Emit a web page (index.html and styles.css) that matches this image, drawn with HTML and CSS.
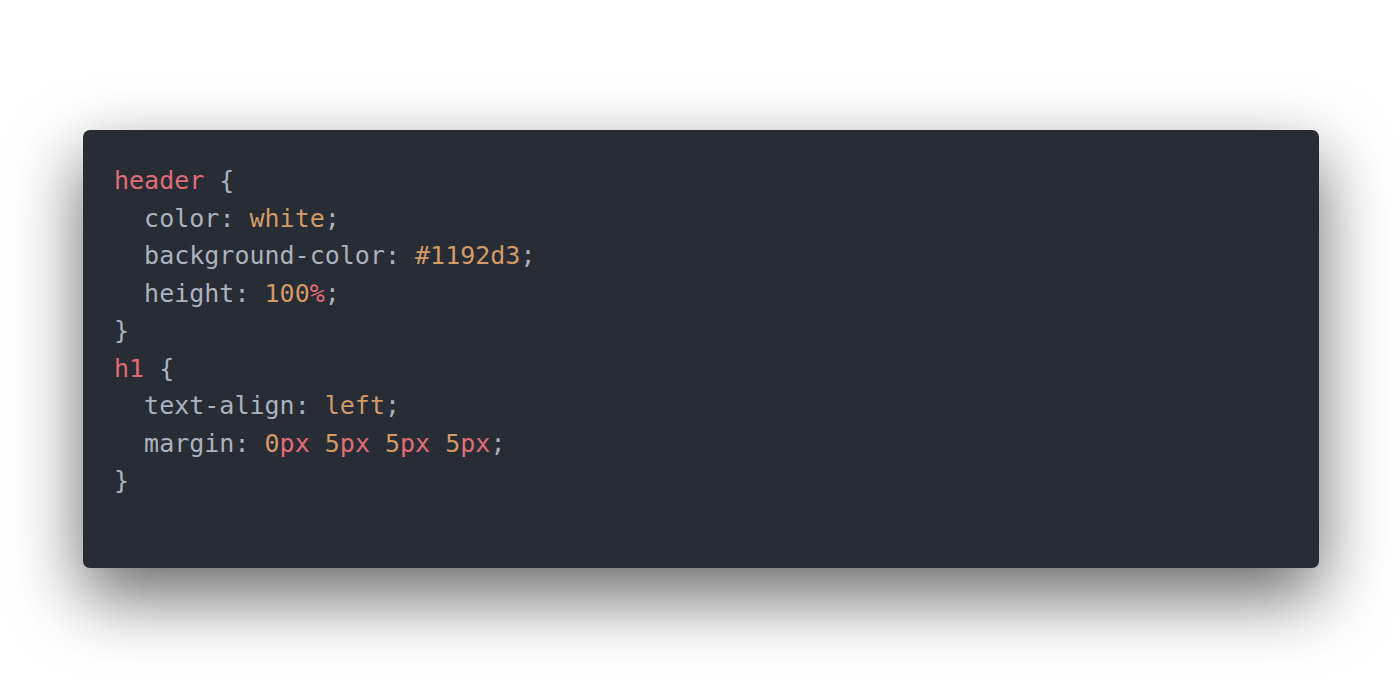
FILE: index.html
```html
<!DOCTYPE html>
<html>
<head>
<meta charset="utf-8">
<link rel="stylesheet" href="styles.css">
</head>
<body>
<div class="page">
<pre class="code"><code><span class="sel">header</span> {
  <span class="prop">color</span>: <span class="val">white</span>;
  <span class="prop">background-color</span>: <span class="val">#1192d3</span>;
  <span class="prop">height</span>: <span class="val">100</span><span class="unit">%</span>;
}
<span class="sel">h1</span> {
  <span class="prop">text-align</span>: <span class="val">left</span>;
  <span class="prop">margin</span>: <span class="val">0</span><span class="unit">px</span> <span class="val">5</span><span class="unit">px</span> <span class="val">5</span><span class="unit">px</span> <span class="val">5</span><span class="unit">px</span>;
}</code></pre>
</div>
</body>
</html>
```

FILE: styles.css
```css
html, body {
  margin: 0;
  padding: 0;
  background: #ffffff;
}

.page {
  min-height: 699px;
  box-sizing: border-box;
  padding: 130px 81px 0 83px;
}

.code {
  margin: 0;
  height: 438px;
  box-sizing: border-box;
  padding: 32px 30px 0 31px;
  background: #282c34;
  border-radius: 7px;
  box-shadow: 0 28px 70px rgba(0, 0, 0, 0.6);
  font-family: "DejaVu Sans Mono", monospace;
  font-size: 25px;
  line-height: 37.5px;
  color: #abb2bf;
  white-space: pre;
}

.sel { color: #e06c75; }
.prop { color: #abb2bf; }
.val { color: #d19a66; }
.unit { color: #e06c75; }
```
